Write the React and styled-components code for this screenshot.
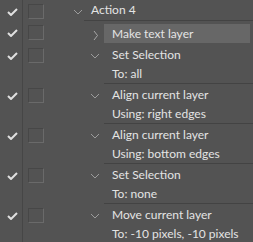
import React from "react";
import styled, { createGlobalStyle } from "styled-components";

const Global = createGlobalStyle`
  html, body { margin: 0; padding: 0; background: #535353; }
  body { font-family: Lato, "Noto Sans", sans-serif; }
`;

const Panel = styled.div`
  width: 253px;
  height: 242px;
  overflow: hidden;
  background: #535353;
  color: #e4e4e4;
  font-size: 12px;
  display: flex;
  flex-direction: column;
`;

const Row = styled.div`
  display: flex;
  align-items: stretch;
  height: ${(p) => p.$h}px;
  flex: none;
`;

const CheckCell = styled.div`
  width: 23px;
  flex: none;
  border-right: 1px solid #464646;
  padding-top: ${(p) => p.$top}px;
  box-sizing: border-box;
  display: flex;
  justify-content: center;
  align-items: flex-start;
  padding-left: 2px;
`;

const BoxCell = styled.div`
  width: 26px;
  flex: none;
  padding-left: 5px;
  padding-top: ${(p) => p.$top}px;
  box-sizing: border-box;
`;

const Box = styled.div`
  width: 16px;
  height: 15px;
  box-sizing: border-box;
  border: 1px solid;
  border-color: #474747 #6a6a6a #6a6a6a #474747;
`;

const Spacer = styled.div`
  width: ${(p) => p.$w}px;
  flex: none;
`;

const Toggle = styled.div`
  width: 14px;
  flex: none;
  padding-top: ${(p) => p.$top}px;
  box-sizing: border-box;
  display: flex;
  align-items: flex-start;
`;

const Body = styled.div`
  flex: 1;
  min-width: 0;
  display: flex;
  flex-direction: column;
  border-bottom: ${(p) => (p.$sep ? "1px solid #434343" : "none")};
`;

const Line = styled.div`
  height: ${(p) => p.$h}px;
  line-height: ${(p) => p.$h}px;
  padding-left: ${(p) => p.$pad}px;
  margin-top: ${(p) => p.$mt || 0}px;
  margin-right: ${(p) => (p.$active ? 3 : 0)}px;
  background: ${(p) => (p.$active ? "#676767" : "transparent")};
  white-space: nowrap;
  flex: none;
`;

const Check = () => (
  <svg width="11" height="8" viewBox="0 0 11 8">
    <path d="M1 4 L4 7 L10 1" fill="none" stroke="#e0e0e0" strokeWidth="2" />
  </svg>
);

const ChevDown = ({ x = 4 }) => (
  <svg width="14" height="6" viewBox="0 0 14 6">
    <path
      d={`M${x} 1 L${x + 4} 5 L${x + 8} 1`}
      fill="none"
      stroke="#9c9c9c"
      strokeWidth="1"
    />
  </svg>
);

const ChevRight = () => (
  <svg width="14" height="11" viewBox="0 0 14 11">
    <path d="M4 1 L7.5 5.5 L4 10" fill="none" stroke="#a8a8a8" strokeWidth="1" />
  </svg>
);

const steps = [
  { title: "Set Selection", param: "To: all" },
  { title: "Align current layer", param: "Using: right edges" },
  { title: "Align current layer", param: "Using: bottom edges" },
  { title: "Set Selection", param: "To: none" },
  { title: "Move current layer", param: "To: -10 pixels, -10 pixels" },
];

export default function App() {
  return (
    <>
      <Global />
      <Panel>
        <Row $h={21}>
          <CheckCell $top={8}>
            <Check />
          </CheckCell>
          <BoxCell $top={4}>
            <Box />
          </BoxCell>
          <Spacer $w={21} />
          <Toggle $top={9}>
            <ChevDown x={4} />
          </Toggle>
          <Body $sep>
            <Line $h={20} $pad={7}>Action 4</Line>
          </Body>
        </Row>
        <Row $h={23}>
          <CheckCell $top={8}>
            <Check />
          </CheckCell>
          <BoxCell $top={4}>
            <Box />
          </BoxCell>
          <Spacer $w={41} />
          <Toggle $top={9}>
            <ChevRight />
          </Toggle>
          <Body>
            <Line $h={19} $pad={8} $mt={3} $active>
              Make text layer
            </Line>
          </Body>
        </Row>
        {steps.map((s, i) => (
          <Row key={i} $h={40}>
            <CheckCell $top={8}>
              <Check />
            </CheckCell>
            <BoxCell $top={4}>
              <Box />
            </BoxCell>
            <Spacer $w={41} />
            <Toggle $top={9}>
              <ChevDown x={1} />
            </Toggle>
            <Body $sep={i < steps.length - 1}>
              <Line $h={20} $pad={8} $mt={1}>
                {s.title}
              </Line>
              <Line $h={18} $pad={8}>
                {s.param}
              </Line>
            </Body>
          </Row>
        ))}
      </Panel>
    </>
  );
}
